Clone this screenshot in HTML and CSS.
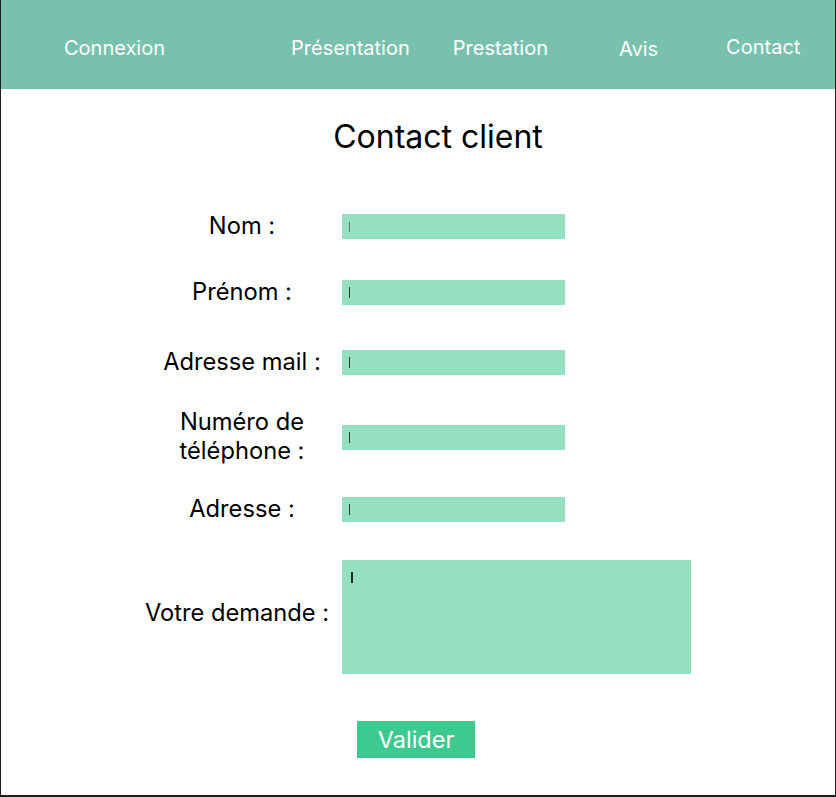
FILE: index.html
```html
<!DOCTYPE html>
<html lang="fr">
<head>
<meta charset="utf-8">
<title>Contact client</title>
<link rel="stylesheet" href="styles.css">
</head>
<body>
<div class="page">
  <header class="topbar">
    <nav class="nav">
      <a class="nav-link nav-connexion">Connexion</a>
      <a class="nav-link nav-presentation">Présentation</a>
      <a class="nav-link nav-prestation">Prestation</a>
      <a class="nav-link nav-avis">Avis</a>
      <a class="nav-link nav-contact">Contact</a>
    </nav>
  </header>
  <main class="content">
    <h1 class="title">Contact client</h1>
    <form class="form">
      <label class="label">Nom :</label>
      <div class="field"><span class="caret caret-light"></span></div>
      <label class="label">Prénom :</label>
      <div class="field"><span class="caret"></span></div>
      <label class="label">Adresse mail :</label>
      <div class="field"><span class="caret"></span></div>
      <label class="label">Numéro de<br>téléphone :</label>
      <div class="field"><span class="caret"></span></div>
      <label class="label">Adresse :</label>
      <div class="field"><span class="caret"></span></div>
      <label class="label label-demande">Votre demande :</label>
      <div class="area"><span class="caret caret-area"></span></div>
    </form>
    <div class="actions">
      <button type="button" class="btn">Valider</button>
    </div>
  </main>
</div>
</body>
</html>
```

FILE: styles.css
```css
* { box-sizing: border-box; }
html, body { margin: 0; padding: 0; background: #ffffff; }
body { font-family: Inter, "Noto Sans", sans-serif; color: #000; }

.page {
  width: 836px;
  height: 797px;
  border-left: 1px solid #1e1e1e;
  border-right: 1px solid #1e1e1e;
  border-bottom: 2px solid #1e1e1e;
  display: flex;
  flex-direction: column;
}

.topbar {
  height: 89px;
  background: #78c2ad;
  flex: none;
}
.nav {
  display: flex;
  align-items: center;
  height: 100%;
  padding-left: 63px;
  padding-top: 6px;
}
.nav-link {
  color: #ffffff;
  font-size: 20px;
  line-height: 24px;
  white-space: nowrap;
}
.nav-presentation { margin-left: 126px; }
.nav-prestation { margin-left: 43px; }
.nav-avis { margin-left: 71px; position: relative; top: 1px; }
.nav-contact { margin-left: 68px; position: relative; top: -1px; }

.content { flex: 1; }

.title {
  margin: 30px 0 0;
  text-align: center;
  font-weight: 400;
  font-size: 32px;
  line-height: 36px;
  padding-left: 40px;
}

.form {
  margin-top: 38px;
  display: grid;
  grid-template-columns: 200px 1fr;
  grid-template-rows: 66px 66px 74px 76px 69px 146px;
  align-items: center;
  padding-left: 141px;
}
.label {
  text-align: center;
  font-size: 23.7px;
  line-height: 29px;
  position: relative;
  top: -1px;
}
.label-demande { margin-left: -10px; top: -5px; }

.field {
  width: 223px;
  height: 25px;
  background: #95e0c1;
  display: flex;
  align-items: center;
  padding-left: 7px;
}
.area {
  width: 349px;
  height: 114px;
  background: #95e0c1;
  padding: 12px 0 0 9px;
}
.caret {
  display: block;
  width: 1px;
  height: 11px;
  background: #333;
}
.caret-light { background: #5b7a6c; height: 10px; margin-top: 2px; }
.caret-area { width: 2px; height: 11px; background: #222; }

.actions {
  margin-top: 31px;
  padding-left: 356px;
}
.btn {
  width: 118px;
  height: 37px;
  border: none;
  background: #3dc990;
  color: #ffffff;
  font-family: Inter, "Noto Sans", sans-serif;
  font-size: 23.5px;
  line-height: 26px;
  padding: 0;
}
```
